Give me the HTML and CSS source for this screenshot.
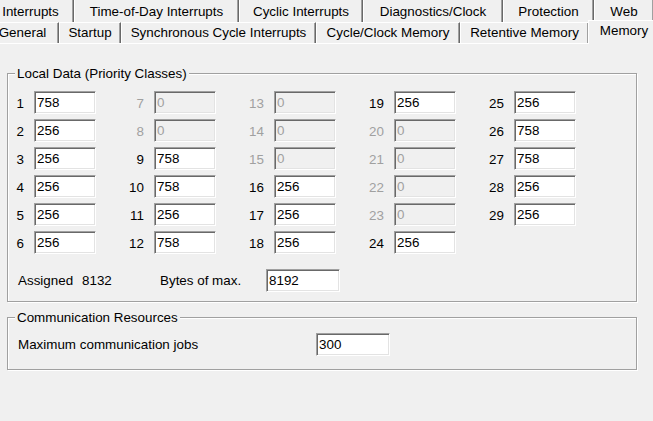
FILE: index.html
```html
<!DOCTYPE html>
<html>
<head>
<meta charset="utf-8">
<title>Memory</title>
<link rel="stylesheet" href="styles.css">
</head>
<body>
<div class="tabs">
  <div class="tab-row row-back">
    <div class="tab tab-interrupts">Interrupts</div>
    <div class="tab tab-tod">Time-of-Day Interrupts</div>
    <div class="tab tab-cyclic">Cyclic Interrupts</div>
    <div class="tab tab-diag">Diagnostics/Clock</div>
    <div class="tab tab-prot">Protection</div>
    <div class="tab tab-web">Web</div>
  </div>
  <div class="tab-row row-front">
    <div class="tab tab-general">General</div>
    <div class="tab tab-startup">Startup</div>
    <div class="tab tab-sync">Synchronous Cycle Interrupts</div>
    <div class="tab tab-cycle">Cycle/Clock Memory</div>
    <div class="tab tab-retentive">Retentive Memory</div>
    <div class="tab tab-memory selected">Memory</div>
  </div>
</div>
<div class="panel">
  <div class="group group-local">
    <div class="legend">Local Data (Priority Classes)</div>
    <div class="slots">
      <div class="slot"><span class="slot-label">1</span><input class="edit" value="758"></div>
      <div class="slot"><span class="slot-label">2</span><input class="edit" value="256"></div>
      <div class="slot"><span class="slot-label">3</span><input class="edit" value="256"></div>
      <div class="slot"><span class="slot-label">4</span><input class="edit" value="256"></div>
      <div class="slot"><span class="slot-label">5</span><input class="edit" value="256"></div>
      <div class="slot"><span class="slot-label">6</span><input class="edit" value="256"></div>

      <div class="slot off"><span class="slot-label">7</span><input class="edit" value="0" disabled></div>
      <div class="slot off"><span class="slot-label">8</span><input class="edit" value="0" disabled></div>
      <div class="slot"><span class="slot-label">9</span><input class="edit" value="758"></div>
      <div class="slot"><span class="slot-label">10</span><input class="edit" value="758"></div>
      <div class="slot"><span class="slot-label">11</span><input class="edit" value="256"></div>
      <div class="slot"><span class="slot-label">12</span><input class="edit" value="758"></div>

      <div class="slot off"><span class="slot-label">13</span><input class="edit" value="0" disabled></div>
      <div class="slot off"><span class="slot-label">14</span><input class="edit" value="0" disabled></div>
      <div class="slot off"><span class="slot-label">15</span><input class="edit" value="0" disabled></div>
      <div class="slot"><span class="slot-label">16</span><input class="edit" value="256"></div>
      <div class="slot"><span class="slot-label">17</span><input class="edit" value="256"></div>
      <div class="slot"><span class="slot-label">18</span><input class="edit" value="256"></div>

      <div class="slot"><span class="slot-label">19</span><input class="edit" value="256"></div>
      <div class="slot off"><span class="slot-label">20</span><input class="edit" value="0" disabled></div>
      <div class="slot off"><span class="slot-label">21</span><input class="edit" value="0" disabled></div>
      <div class="slot off"><span class="slot-label">22</span><input class="edit" value="0" disabled></div>
      <div class="slot off"><span class="slot-label">23</span><input class="edit" value="0" disabled></div>
      <div class="slot"><span class="slot-label">24</span><input class="edit" value="256"></div>

      <div class="slot"><span class="slot-label">25</span><input class="edit" value="256"></div>
      <div class="slot"><span class="slot-label">26</span><input class="edit" value="758"></div>
      <div class="slot"><span class="slot-label">27</span><input class="edit" value="758"></div>
      <div class="slot"><span class="slot-label">28</span><input class="edit" value="256"></div>
      <div class="slot"><span class="slot-label">29</span><input class="edit" value="256"></div>
    </div>
    <div class="summary">
      <span class="summary-label">Assigned</span>
      <span class="summary-value">8132</span>
      <span class="summary-max">Bytes of max.</span>
      <input class="edit wide" value="8192">
    </div>
  </div>
  <div class="group group-comm">
    <div class="legend">Communication Resources</div>
    <div class="comm-row">
      <span class="comm-label">Maximum communication jobs</span>
      <input class="edit wide" value="300">
    </div>
  </div>
</div>
</body>
</html>
```
FILE: styles.css
```css
html, body {
  margin: 0;
  background: #f0f0f0;
  overflow: hidden;
}
body {
  width: 653px;
  height: 421px;
  font-family: "Liberation Sans", Arial, sans-serif;
  font-size: 13.4px;
  color: #000;
}

/* ---------- tabs ---------- */
.tab-row {
  display: flex;
  white-space: nowrap;
  align-items: flex-start;
}
.row-back {
  height: 22px;
  margin-left: -13px;
}
.row-front {
  height: 21px;
  margin-left: -14px;
}
.tab {
  flex: none;
  box-sizing: border-box;
  text-align: center;
  line-height: 20px;
  border-left: 1px solid #fff;
  border-right: 1px solid #696969;
  box-shadow: inset -1px 0 0 #a0a0a0;
  background: #f0f0f0;
}
.row-back .tab {
  height: 22px;
  padding-top: 2px;
}
.row-front .tab {
  height: 21px;
  border-top: 1px solid #fff;
}
.row-front .tab.selected {
  height: 24px;
  margin-top: -2px;
  margin-left: -1px;
  position: relative;
  z-index: 1;
}
.tab-interrupts { width: 87px; }
.tab-tod { width: 165px; }
.tab-cyclic { width: 124px; }
.tab-diag { width: 140px; }
.tab-prot { width: 91px; }
.tab-web { width: 60px; }

.tab-general { width: 73px; }
.tab-startup { width: 62px; }
.tab-sync { width: 195px; }
.tab-cycle { width: 144px; }
.tab-retentive { width: 129px; }
.tab-memory { width: 72px; }

/* ---------- panel ---------- */
.panel {
  border-top: 1px solid #fff;
  padding: 29px 0 0 7px;
}
.group {
  position: relative;
  box-sizing: border-box;
  width: 630px;
  border: 1px solid #a0a0a0;
  box-shadow: 1px 1px 0 #fff, inset 1px 1px 0 #fff;
}
.legend {
  position: absolute;
  left: 7px;
  top: -8px;
  padding: 0 2px;
  line-height: 15px;
  background: #f0f0f0;
  white-space: nowrap;
}

.group-local {
  padding: 17px 0 9px 0;
}
.slots {
  display: grid;
  grid-template-rows: repeat(6, 23px);
  grid-auto-flow: column;
  grid-auto-columns: 120px;
  row-gap: 5px;
}
.slot {
  display: flex;
}
.slot-label {
  width: 16px;
  margin-right: 10px;
  text-align: right;
  line-height: 15px;
  padding-top: 5px;
  white-space: nowrap;
}
.slot.off .slot-label {
  color: #a0a0a0;
}

.edit {
  box-sizing: border-box;
  width: 62px;
  height: 23px;
  margin: 0;
  padding: 0 2px 1px 2px;
  font: inherit;
  color: #000;
  background: #fff;
  border: 1px solid;
  border-color: #a0a0a0 #fff #fff #a0a0a0;
  box-shadow: inset 1px 1px 0 #696969, inset -1px -1px 0 #e3e3e3;
  outline: none;
}
.edit:disabled {
  background: #f0f0f0;
  color: #a0a0a0;
}
.edit.wide {
  width: 74px;
}

.summary {
  display: flex;
  align-items: center;
  height: 23px;
  margin-top: 15px;
  padding-left: 10px;
}
.summary-label { width: 64px; }
.summary-value { width: 78px; }
.summary-max { width: 106px; }

.group-comm {
  margin-top: 15px;
  padding: 15px 0 13px 10px;
}
.comm-row {
  display: flex;
  align-items: center;
}
.comm-label {
  width: 298px;
}
```
